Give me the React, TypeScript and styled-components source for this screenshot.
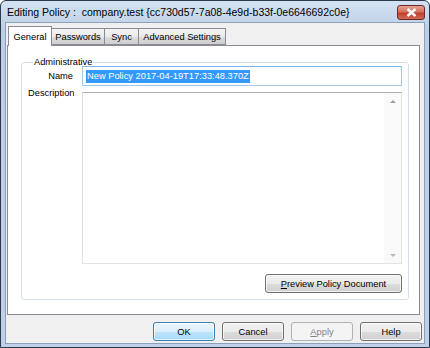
import React from "react";
import styled, { createGlobalStyle } from "styled-components";

const GlobalStyle = createGlobalStyle`
  html, body {
    margin: 0;
    padding: 0;
    background: #ffffff;
  }
  body {
    font-family: "Liberation Sans", Arial, sans-serif;
    font-size: 9.3px;
    color: #000;
  }
`;

const Window = styled.div`
  width: 430px;
  height: 348px;
  box-sizing: border-box;
  border: 1px solid #2d3a4a;
  border-radius: 6px 6px 0 0;
  background: linear-gradient(#d3e2f3, #bccfe6 30px, #bfd1e8);
  display: flex;
  flex-direction: column;
  padding: 0 4px 3px 4px;
`;

const TitleBar = styled.div`
  height: 21px;
  display: flex;
  align-items: center;
  justify-content: space-between;
  padding-left: 2px;
  font-size: 10.5px;
  color: #000;
`;

const CloseButton = styled.div`
  width: 28px;
  height: 15px;
  margin-top: 2px;
  box-sizing: border-box;
  border: 1px solid #6d2a25;
  border-radius: 3px;
  background: linear-gradient(#e5a293, #d2715f 45%, #c0402c 55%, #d16a55);
  display: flex;
  align-items: center;
  justify-content: center;
`;

const Client = styled.div`
  flex: 1;
  background: #f0f0f0;
  border: 1px solid #8c9fb6;
  display: flex;
  flex-direction: column;
  padding: 3px 4px 0 1px;
`;

const TabStrip = styled.div`
  display: flex;
  align-items: flex-end;
  height: 19px;
  padding-left: 1px;
  position: relative;
  z-index: 1;
`;

const Tab = styled.div<{ $active?: boolean; $width: number }>`
  box-sizing: border-box;
  width: ${(p) => p.$width}px;
  height: ${(p) => (p.$active ? "20px" : "17px")};
  margin-bottom: ${(p) => (p.$active ? "-1px" : "0")};
  margin-right: -1px;
  border: 1px solid #898c95;
  border-bottom: ${(p) => (p.$active ? "none" : "1px solid #898c95")};
  background: ${(p) =>
    p.$active ? "#ffffff" : "linear-gradient(#f3f3f3, #ebebeb 50%, #dddddd 51%, #cfcfcf)"};
  display: flex;
  align-items: center;
  justify-content: center;
  white-space: nowrap;
  position: relative;
  z-index: ${(p) => (p.$active ? 2 : 1)};
`;

const Panel = styled.div`
  height: 270px;
  box-sizing: border-box;
  background: #ffffff;
  border: 1px solid #898c95;
  padding: 11px 10px 0 13px;
`;

const GroupBox = styled.fieldset`
  margin: 0;
  box-sizing: border-box;
  border: 1px solid #d5dfe5;
  border-radius: 3px;
  padding: 0 6px 6px 6px;
  display: grid;
  grid-template-columns: 45px 1fr;
  column-gap: 9px;
  align-content: start;
`;

const Legend = styled.legend`
  padding: 0 1px;
  margin-left: 5px;
  line-height: 10px;
`;

const Label = styled.div<{ $right?: boolean }>`
  text-align: ${(p) => (p.$right ? "right" : "left")};
  line-height: 11px;
  padding-top: ${(p) => (p.$right ? "4px" : "2px")};
`;

const NameInput = styled.div`
  height: 20px;
  box-sizing: border-box;
  border: 1px solid #a5c7e1;
  border-top-color: #7eb4ea;
  background: #fff;
  display: flex;
  align-items: center;
  padding-left: 3px;
  margin-top: -1px;
`;

const Selected = styled.span`
  background: #3399ff;
  color: #fff;
  line-height: 13px;
  padding: 0 1px;
`;

const TextArea = styled.div`
  margin-top: 6px;
  height: 172px;
  box-sizing: border-box;
  border: 1px solid #e0e3e8;
  border-top-color: #abadb3;
  border-left-color: #dbdfe6;
  background: #fff;
  display: flex;
  justify-content: flex-end;
`;

const ScrollBar = styled.div`
  width: 17px;
  background: #f9f9f9;
  display: flex;
  flex-direction: column;
  justify-content: space-between;
  align-items: center;
  padding: 7px 0 6px;
  box-sizing: border-box;
`;

const Arrow = styled.div<{ $down?: boolean }>`
  width: 0;
  height: 0;
  border-left: 3px solid transparent;
  border-right: 3px solid transparent;
  ${(p) =>
    p.$down ? "border-top: 3px solid #b8b8b8;" : "border-bottom: 3px solid #9c9c9c;"}
`;

const PreviewRow = styled.div`
  grid-column: 2;
  display: flex;
  justify-content: flex-end;
  margin-top: 10px;
`;

const Button = styled.div<{ $default?: boolean; $disabled?: boolean; $width?: number }>`
  width: ${(p) => p.$width ?? 62}px;
  height: 19px;
  box-sizing: border-box;
  border: 1px solid
    ${(p) => (p.$default ? "#3c7fb1" : p.$disabled ? "#adb2b5" : "#707070")};
  border-radius: 3px;
  background: ${(p) =>
    p.$disabled
      ? "#f4f4f4"
      : p.$default
      ? "linear-gradient(#eaf6fd, #d9f0fc 50%, #bee6fd 51%, #a7d9f5)"
      : "linear-gradient(#f2f2f2, #ebebeb 50%, #dddddd 51%, #cfcfcf)"};
  box-shadow: inset 0 0 0 1px
    ${(p) => (p.$disabled ? "#f4f4f4" : "rgba(255,255,255,0.7)")};
  color: ${(p) => (p.$disabled ? "#838383" : "#000")};
  display: flex;
  align-items: center;
  justify-content: center;
`;

const ButtonRow = styled.div`
  display: flex;
  justify-content: flex-end;
  gap: 7px;
  margin-top: 7px;
  margin-right: -2px;
`;

const U = styled.span`
  text-decoration: underline;
`;

export default function App() {
  return (
    <>
      <GlobalStyle />
      <Window>
        <TitleBar>
          <span>Editing Policy :&nbsp; company.test {"{cc730d57-7a08-4e9d-b33f-0e6646692c0e}"}</span>
          <CloseButton>
            <svg width="11" height="9" viewBox="0 0 11 9">
              <path d="M1.5 1 L9.5 8 M9.5 1 L1.5 8" stroke="#ffffff" strokeWidth="2.4" />
            </svg>
          </CloseButton>
        </TitleBar>
        <Client>
          <TabStrip>
            <Tab $active $width={44}>General</Tab>
            <Tab $width={54}>Passwords</Tab>
            <Tab $width={35}>Sync</Tab>
            <Tab $width={88}>Advanced Settings</Tab>
          </TabStrip>
          <Panel>
            <GroupBox>
              <Legend>Administrative</Legend>
              <Label $right>Name</Label>
              <NameInput>
                <Selected>New Policy 2017-04-19T17:33:48.370Z</Selected>
              </NameInput>
              <Label>Description</Label>
              <TextArea>
                <ScrollBar>
                  <Arrow />
                  <Arrow $down />
                </ScrollBar>
              </TextArea>
              <PreviewRow>
                <Button $width={137}>
                  <span>
                    <U>P</U>review Policy Document
                  </span>
                </Button>
              </PreviewRow>
            </GroupBox>
          </Panel>
          <ButtonRow>
            <Button $default>OK</Button>
            <Button>Cancel</Button>
            <Button $disabled>
              <span>
                <U>A</U>pply
              </span>
            </Button>
            <Button>Help</Button>
          </ButtonRow>
        </Client>
      </Window>
    </>
  );
}
